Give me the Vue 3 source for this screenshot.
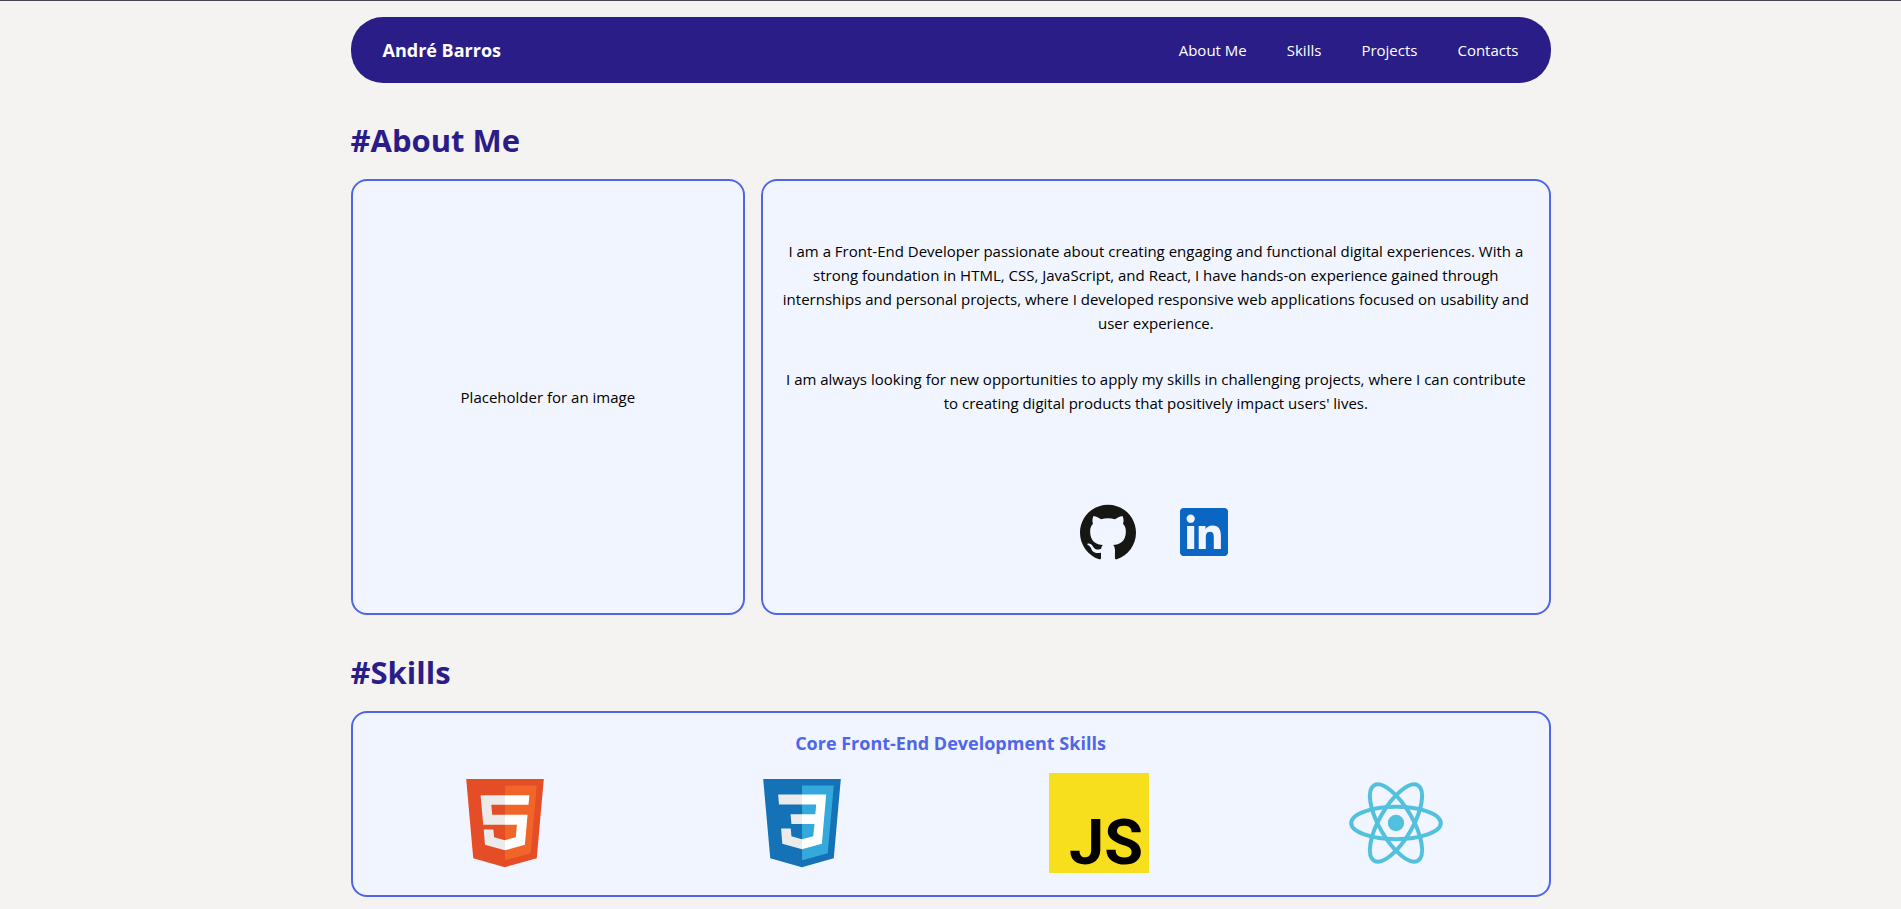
<script setup>
const links = [
  { label: 'About Me', href: '#about' },
  { label: 'Skills', href: '#skills' },
  { label: 'Projects', href: '#projects' },
  { label: 'Contacts', href: '#contacts' },
]
</script>

<template>
  <div class="page">
    <header class="bar">
      <a class="brand" href="#top">André Barros</a>
      <nav class="nav">
        <a v-for="link in links" :key="link.label" :href="link.href">{{ link.label }}</a>
      </nav>
    </header>

    <main>
      <section id="about">
        <h1>#About Me</h1>
        <div class="about">
          <div class="card photo"><p>Placeholder for an image</p></div>
          <div class="card bio">
            <div class="bio-text">
              <p>
                I am a Front-End Developer passionate about creating engaging and functional digital
                experiences. With a strong foundation in HTML, CSS, JavaScript, and React, I have
                hands-on experience gained through internships and personal projects, where I developed
                responsive web applications focused on usability and user experience.
              </p>
              <p>
                I am always looking for new opportunities to apply my skills in challenging projects,
                where I can contribute to creating digital products that positively impact users' lives.
              </p>
            </div>
            <div class="social">
              <a href="#github" aria-label="GitHub">
                <svg viewBox="-5 -5 138 138" aria-hidden="true">
                  <path fill="#161614" d="M64 5.103c-33.347 0-60.388 27.035-60.388 60.388 0 26.682 17.303 49.317 41.297 57.303 3.017.56 4.125-1.31 4.125-2.905 0-1.44-.056-6.197-.082-11.243-16.8 3.653-20.345-7.125-20.345-7.125-2.747-6.98-6.705-8.836-6.705-8.836-5.48-3.748.413-3.67.413-3.67 6.063.425 9.257 6.223 9.257 6.223 5.386 9.23 14.127 6.562 17.573 5.02.542-3.903 2.107-6.568 3.834-8.076-13.413-1.525-27.514-6.704-27.514-29.843 0-6.593 2.36-11.98 6.223-16.21-.628-1.52-2.695-7.662.584-15.98 0 0 5.07-1.623 16.61 6.19C53.7 35 58.867 34.327 64 34.304c5.13.023 10.3.694 15.127 2.033 11.526-7.813 16.59-6.19 16.59-6.19 3.287 8.317 1.22 14.46.593 15.98 3.872 4.23 6.215 9.617 6.215 16.21 0 23.194-14.127 28.3-27.574 29.796 2.167 1.874 4.097 5.55 4.097 11.183 0 8.08-.07 14.583-.07 16.572 0 1.607 1.088 3.49 4.148 2.897 23.98-7.994 41.263-30.622 41.263-57.294C124.388 32.14 97.35 5.104 64 5.104z" />
                </svg>
              </a>
              <a href="#linkedin" aria-label="LinkedIn">
                <svg viewBox="-4 -4 32 32" aria-hidden="true">
                  <path fill="#0a66c2" d="M20.447 20.452h-3.554v-5.569c0-1.328-.027-3.037-1.852-3.037-1.853 0-2.136 1.445-2.136 2.939v5.667H9.351V9h3.414v1.561h.046c.477-.9 1.637-1.85 3.37-1.85 3.601 0 4.267 2.37 4.267 5.455v6.286zM5.337 7.433a2.062 2.062 0 0 1-2.063-2.065 2.064 2.064 0 1 1 2.063 2.065zm1.782 13.019H3.555V9h3.564v11.452zM22.225 0H1.771C.792 0 0 .774 0 1.729v20.542C0 23.227.792 24 1.771 24h20.451C23.2 24 24 23.227 24 22.271V1.729C24 .774 23.2 0 22.222 0h.003z" />
                </svg>
              </a>
            </div>
          </div>
        </div>
      </section>

      <section id="skills">
        <h1>#Skills</h1>
        <div class="card skills">
          <h2>Core Front-End Development Skills</h2>
          <div class="logos">
            <svg viewBox="-35 -35 581 581" role="img" aria-label="HTML5">
              <path fill="#e44d26" d="M71 460 30 0h451l-41 460-185 52z" />
              <path fill="#f16529" d="m256 472 149-41 35-394H256z" />
              <path fill="#ebebeb" d="M256 208h-75l-5-58h80V94H114l1 15 14 156h127zM256 355h-1l-63-17-4-45h-56l7 89 116 32h1z" />
              <path fill="#fff" d="M255 208v57h70l-7 73-63 17v59l116-32 1-10 13-149 2-15zM255 94v56h137l1-12 3-29 1-15z" />
            </svg>
            <svg viewBox="-35 -35 581 581" role="img" aria-label="CSS3">
              <path fill="#1572b6" d="M71 460 30 0h451l-41 460-185 52z" />
              <path fill="#33a9dc" d="m256 472 149-41 35-394H256z" />
              <path fill="#ebebeb" d="M256 90H117l5 58h134zM256 205h-67l5 57h62zM256 350h-1l-61-17-4-45h-56l7 88 115 32z" />
              <path fill="#fff" d="M255 90v58h83l-5 57h-78v57h73l-7 71-66 17v58l116-32 25-286z" />
            </svg>
            <svg viewBox="0 0 100 100" role="img" aria-label="JavaScript">
              <path fill="#f7df1e" d="M0 0h100v100H0z" />
              <text class="js" x="94" y="91" text-anchor="end">JS</text>
            </svg>
            <svg viewBox="-50 -50 100 100" role="img" aria-label="React">
              <circle r="8.2" fill="#53c1de" />
              <g fill="none" stroke="#53c1de" stroke-width="4">
                <ellipse rx="44.8" ry="16.2" />
                <ellipse rx="43.6" ry="16.6" transform="rotate(60)" />
                <ellipse rx="43.6" ry="16.6" transform="rotate(120)" />
              </g>
            </svg>
          </div>
        </div>
      </section>
    </main>
  </div>
</template>

<style>
body {
  background: #f5f3f2;
}
</style>

<style scoped>
.page {
  box-sizing: border-box;
  border-top: 1px solid #48454e;
  padding: 16px 16px 12px;
  font: 15px/24px "Segoe UI", "Open Sans", "Noto Sans", sans-serif;
  color: #000;
}
.bar,
main {
  max-width: 1200px;
  margin: 0 auto;
}
.bar {
  box-sizing: border-box;
  min-height: 66px;
  display: flex;
  align-items: center;
  justify-content: space-between;
  padding: 0 32px;
  border-radius: 32px;
  background: #2a1d88;
}
a {
  color: #fff;
  text-decoration: none;
}
.brand {
  font-size: 18px;
  font-weight: 700;
}
.nav {
  display: flex;
  gap: 40px;
}
h1 {
  margin: 0;
  padding: 35px 0 17px;
  font-size: 31px;
  line-height: 44px;
  font-weight: 700;
  color: #2a1d88;
}
.card {
  box-sizing: border-box;
  padding: 16px;
  border: 2px solid #5066e8;
  border-radius: 16px;
  background: #f0f5ff;
}
.about {
  display: grid;
  grid-template-columns: 1fr 2fr;
  gap: 16px;
  text-align: center;
}
.card p {
  margin: 0;
}
.photo {
  display: flex;
  align-items: center;
  justify-content: center;
}
.bio {
  display: flex;
  flex-direction: column;
  align-items: center;
  gap: 85px;
  padding: 58px 16px 49px;
}
.bio-text {
  display: grid;
  gap: 32px;
}
.social {
  display: flex;
  gap: 32px;
}
.social a,
.social svg {
  display: block;
  width: 64px;
  height: 64px;
}
.skills {
  padding: 16px 16px 22px;
}
h2 {
  margin: 0 0 16px;
  font-size: 18px;
  line-height: 28px;
  font-weight: 700;
  text-align: center;
  color: #5066e8;
}
.logos {
  display: grid;
  grid-template-columns: repeat(4, 1fr);
  gap: 24px;
  justify-items: center;
}
.logos svg {
  width: 100px;
  height: 100px;
  overflow: visible;
}
.js {
  font: 700 63px Roboto, sans-serif;
}
</style>
